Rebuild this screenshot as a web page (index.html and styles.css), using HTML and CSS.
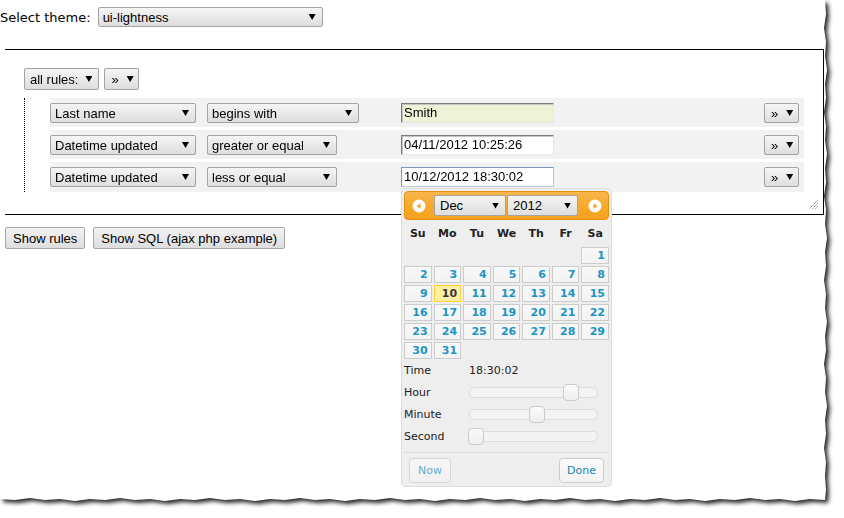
FILE: index.html
```html
<!DOCTYPE html>
<html>
<head>
<meta charset="utf-8">
<title>Query builder</title>
<link rel="stylesheet" href="styles.css">
</head>
<body>
<div class="sheet">
<div class="paper">
  <div class="theme-line">
    <span class="theme-label">Select theme:</span>
    <div class="sel sel-theme">ui-lightness</div>
  </div>

  <div class="builder">
    <div class="group-head">
      <div class="sel sel-tall sel-all">all rules:</div>
      <div class="sel sel-tall sel-mini">»</div>
    </div>
    <div class="rules">
      <div class="rule">
        <div class="sel w-field">Last name</div>
        <div class="sel w-op-long">begins with</div>
        <div class="inp inp-hl">Smith</div>
        <span></span>
        <div class="sel sel-mini">»</div>
      </div>
      <div class="rule">
        <div class="sel w-field">Datetime updated</div>
        <div class="sel w-op">greater or equal</div>
        <div class="inp">04/11/2012 10:25:26</div>
        <span></span>
        <div class="sel sel-mini">»</div>
      </div>
      <div class="rule">
        <div class="sel w-field">Datetime updated</div>
        <div class="sel w-op">less or equal</div>
        <div class="inp inp-focus">10/12/2012 18:30:02</div>
        <span></span>
        <div class="sel sel-mini">»</div>
      </div>
    </div>
    <svg class="grip" width="9" height="9" viewBox="0 0 9 9">
      <path d="M8.5 0.5 L0.5 8.5 M8.5 3.5 L3.5 8.5 M8.5 6.5 L6.5 8.5" stroke="#555" stroke-width="1" stroke-dasharray="1 1" fill="none"/>
    </svg>
  </div>

  <div class="actions">
    <button class="btn">Show rules</button>
    <button class="btn">Show SQL (ajax php example)</button>
  </div>

  <div class="dp">
    <div class="dp-head">
      <svg class="dp-nav" width="16" height="16" viewBox="0 0 16 16"><circle cx="8" cy="8" r="6.5" fill="#fff"/><polygon points="5.5,8 9.5,5.2 9.5,10.8" fill="#f6a828"/></svg>
      <div class="sel sel-month">Dec</div>
      <div class="sel sel-year">2012</div>
      <svg class="dp-nav dp-next" width="16" height="16" viewBox="0 0 16 16"><circle cx="8" cy="8" r="6.5" fill="#fff"/><polygon points="10.5,8 6.5,5.2 6.5,10.8" fill="#f6a828"/></svg>
    </div>
    <div class="dp-dow">
      <span>Su</span><span>Mo</span><span>Tu</span><span>We</span><span>Th</span><span>Fr</span><span>Sa</span>
    </div>
    <div class="dp-days">
      <span></span><span></span><span></span><span></span><span></span><span></span><a>1</a>
      <a>2</a><a>3</a><a>4</a><a>5</a><a>6</a><a>7</a><a>8</a>
      <a>9</a><a class="today">10</a><a>11</a><a>12</a><a>13</a><a>14</a><a>15</a>
      <a>16</a><a>17</a><a>18</a><a>19</a><a>20</a><a>21</a><a>22</a>
      <a>23</a><a>24</a><a>25</a><a>26</a><a>27</a><a>28</a><a>29</a>
      <a>30</a><a>31</a>
    </div>
    <div class="tp">
      <span class="tp-label">Time</span><span class="tp-value">18:30:02</span>
      <span class="tp-label">Hour</span><div class="track"><span class="handle" style="left:78.26%"></span></div>
      <span class="tp-label">Minute</span><div class="track"><span class="handle" style="left:50.85%"></span></div>
      <span class="tp-label">Second</span><div class="track"><span class="handle" style="left:3.39%"></span></div>
    </div>
    <div class="dp-foot">
      <button class="dp-btn dp-now">Now</button>
      <button class="dp-btn dp-done">Done</button>
    </div>
  </div>
</div>
</div>
</body>
</html>
```

FILE: styles.css
```css
* { box-sizing: border-box; }

body {
  margin: 0;
  background: #fff;
  font-family: "Liberation Sans", Arial, sans-serif;
  font-size: 13px;
  color: #000;
}

.sheet {
  width: 834px;
  height: 508px;
  filter: drop-shadow(3px 3px 2px rgba(0, 0, 0, 0.85));
}

.paper {
  position: relative;
  width: 828px;
  height: 502px;
  padding-top: 7px;
  background: #fff;
  clip-path: polygon(0 0, 825px 0, 826px 14px, 824px 28px, 826px 42px, 825px 56px, 827px 70px, 825px 84px, 826px 98px, 824px 112px, 826px 126px, 825px 140px, 827px 154px, 825px 168px, 826px 182px, 824px 196px, 826px 210px, 825px 224px, 827px 238px, 825px 252px, 826px 266px, 824px 280px, 826px 294px, 825px 308px, 827px 322px, 825px 336px, 826px 350px, 824px 364px, 826px 378px, 825px 392px, 827px 406px, 825px 420px, 826px 434px, 824px 448px, 826px 462px, 825px 476px, 826px 490px, 825px 500px, 810px 499px, 795px 501px, 780px 499px, 765px 500px, 750px 498px, 735px 500px, 720px 499px, 705px 501px, 690px 499px, 675px 500px, 660px 498px, 645px 500px, 630px 499px, 615px 501px, 600px 499px, 585px 500px, 570px 498px, 555px 500px, 540px 499px, 525px 501px, 510px 499px, 495px 500px, 480px 498px, 465px 500px, 450px 499px, 435px 501px, 420px 499px, 405px 500px, 390px 498px, 375px 500px, 360px 499px, 345px 501px, 330px 499px, 315px 500px, 300px 498px, 285px 500px, 270px 499px, 255px 501px, 240px 499px, 225px 500px, 210px 498px, 195px 500px, 180px 499px, 165px 501px, 150px 499px, 135px 500px, 120px 498px, 105px 500px, 90px 499px, 75px 501px, 60px 499px, 45px 500px, 30px 498px, 15px 500px, 0 499px);
}

/* ---------- generic select look ---------- */
.sel {
  display: flex;
  align-items: center;
  justify-content: space-between;
  height: 20px;
  padding: 0 6px 0 4px;
  border: 1px solid #a3a3a3;
  border-radius: 2px;
  background: linear-gradient(#f5f5f5, #e9e9e9 50%, #dedede);
  font-family: "Liberation Sans", Arial, sans-serif;
  font-size: 13px;
  color: #000;
  white-space: nowrap;
}

.sel::after {
  content: "";
  flex: none;
  width: 7px;
  height: 6px;
  margin-left: 8px;
  background: #000;
  clip-path: polygon(0 0, 100% 0, 50% 100%);
}

/* ---------- theme line ---------- */
.theme-line {
  display: flex;
  align-items: center;
  height: 20px;
}

.theme-label {
  font-family: "DejaVu Sans", sans-serif;
  font-size: 13px;
  margin-right: 7px;
}

.sel-theme { width: 225px; }

/* ---------- builder ---------- */
.builder {
  position: relative;
  width: 819px;
  height: 166px;
  margin: 22px 0 0 5px;
  padding: 18px 0 0 19px;
  border-top: 1px solid #000;
  border-right: 1px solid #000;
  border-bottom: 1px solid #000;
}

.group-head {
  display: flex;
  gap: 5px;
}

.sel-tall { height: 22px; }

.sel-all { padding-left: 5px; }
.sel-all::after { margin-left: 7px; }

.sel-mini {
  width: 35px;
  padding-left: 6px;
}

.rules {
  width: 780px;
  margin-top: 8px;
  padding-left: 25px;
  border-left: 1px dotted #000;
}

.rule {
  display: grid;
  grid-template-columns: 157px 194px 153px 1fr 40px;
  align-items: start;
  height: 29px;
  padding-top: 5px;
  margin-bottom: 3px;
  background: #f2f2f2;
}

.rule:last-child { margin-bottom: 0; height: 30px; }

.w-field { width: 146px; }
.w-op-long { width: 152px; }
.w-op { width: 130px; }

.inp {
  width: 153px;
  height: 20px;
  padding: 1px 0 0 2px;
  border: 1px solid;
  border-color: #7c7c7c #e6e6e6 #e6e6e6 #7c7c7c;
  box-shadow: inset 1px 1px 0 #c4c4c4;
  background: #fff;
  font-size: 13px;
  line-height: 16px;
  white-space: nowrap;
}

.inp-hl { background: #eef2d7; }

.inp-focus {
  border-color: #7f97b8 #b5c6dc #b5c6dc #7f97b8;
  box-shadow: none;
}

.grip {
  position: absolute;
  right: 5px;
  bottom: 5px;
}

/* ---------- buttons ---------- */
.actions {
  display: flex;
  gap: 8px;
  margin: 12px 0 0 5px;
}

.btn {
  height: 22px;
  padding: 0 7px;
  border: 1px solid #a8a8a8;
  border-radius: 2px;
  background: linear-gradient(#f3f3f3, #e8e8e8 50%, #dddddd);
  font-family: "Liberation Sans", Arial, sans-serif;
  font-size: 13px;
  color: #000;
}

/* ---------- datepicker ---------- */
.dp {
  position: absolute;
  left: 401px;
  top: 188px;
  width: 211px;
  padding: 2px 2px 3px;
  border: 1px solid #dddddd;
  border-radius: 4px;
  background: #eeeeee;
  font-family: "DejaVu Sans", sans-serif;
  font-size: 11px;
  color: #222;
}

.dp-head {
  display: flex;
  align-items: center;
  height: 29px;
  padding-left: 6px;
  border: 1px solid #e78f08;
  border-radius: 4px;
  background: linear-gradient(#f8b64c, #f6a828 60%, #f4a020);
}

.dp-nav { flex: none; margin-right: 7px; }
.dp-next { margin: 0 0 0 9px; }

.sel-month {
  width: 72px;
  height: 21px;
  padding-left: 5px;
}

.sel-year {
  width: 71px;
  height: 21px;
  margin-left: 1px;
  padding-left: 5px;
}

.dp-dow {
  display: grid;
  grid-template-columns: repeat(7, 1fr);
  column-gap: 2px;
  align-items: center;
  height: 27px;
  text-align: center;
  font-weight: bold;
  color: #222;
}

.dp-days {
  display: grid;
  grid-template-columns: repeat(7, 1fr);
  grid-auto-rows: 17px;
  gap: 2px;
}

.dp-days a {
  border: 1px solid #cccccc;
  background: linear-gradient(#f8f8f8, #f3f3f3);
  color: #1c94c4;
  font-weight: bold;
  text-align: right;
  padding-right: 3px;
  line-height: 15px;
}

.dp-days a.today {
  border-color: #fed22f;
  background: #fdefa3;
  color: #363636;
}

.tp {
  display: grid;
  grid-template-columns: 65px 129px;
  grid-auto-rows: 22px;
  align-items: center;
}

.tp-label { color: #222; }
.tp-value { color: #222; }

.track {
  position: relative;
  height: 11px;
  border: 1px solid #dddddd;
  border-radius: 5px;
  background: #f3f3f3;
}

.handle {
  position: absolute;
  top: -4px;
  width: 16px;
  height: 17px;
  margin-left: -6px;
  border: 1px solid #cccccc;
  border-radius: 4px;
  background: linear-gradient(#fafafa, #eeeeee);
}

.dp-foot {
  display: flex;
  justify-content: space-between;
  margin-top: 5px;
  padding: 5px 5px 0;
  border-top: 1px solid #dddddd;
}

.dp-btn {
  height: 25px;
  padding: 0 7px;
  border: 1px solid #cccccc;
  border-radius: 4px;
  background: linear-gradient(#fafafa, #f3f3f3);
  font-family: "DejaVu Sans", sans-serif;
  font-size: 11px;
  color: #1c94c4;
}

.dp-now { padding: 0 8px; opacity: 0.7; }
.dp-done { color: #1585b5; }
```
